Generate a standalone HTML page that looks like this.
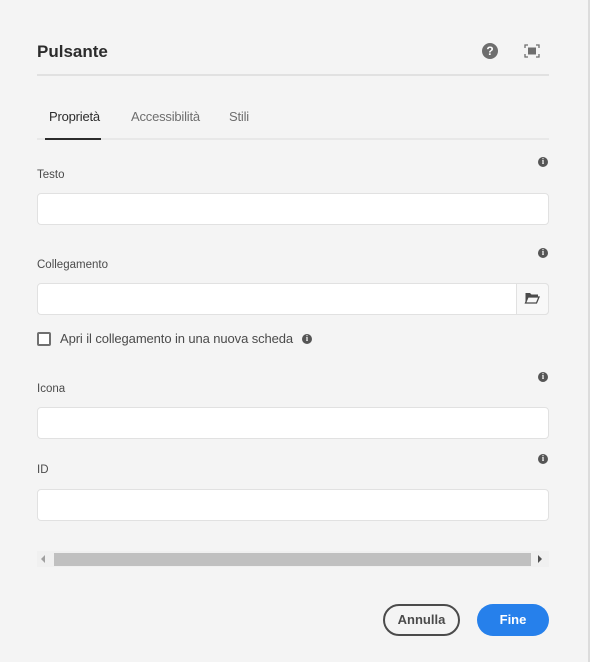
<!DOCTYPE html>
<html><head><meta charset="utf-8"><style>
*{box-sizing:border-box;margin:0;padding:0}
body{width:590px;height:662px;background:#f4f4f4;font-family:"Liberation Sans",sans-serif;position:relative;overflow:hidden;color:#4b4b4b}
.a{position:absolute}
.border{right:0;top:0;width:2px;height:662px;background:#dcdcdc}
.title{left:37px;top:42px;font-size:17px;font-weight:bold;color:#2c2c2c}
.sep{left:37px;top:74px;width:512px;height:2px;background:#e1e1e1}
.tab{top:109px;font-size:13px;color:#6e6e6e;letter-spacing:-0.2px}
.lbl{left:37px;font-size:11.5px;color:#4b4b4b}
.inp{left:37px;width:512px;height:32px;background:#fff;border:1px solid #e1e1e1;border-radius:4px}
.info{width:10px;height:10px;border-radius:50%;background:#555;color:#fff;font-size:8px;font-weight:bold;text-align:center;line-height:10px;font-family:"Liberation Serif",serif}
.btn{top:604px;height:32px;border-radius:16px;font-size:13px;font-weight:bold;text-align:center;line-height:28px}
</style></head><body>
<div class="a border"></div>
<div class="a title">Pulsante</div>
<div class="a" style="left:482px;top:43px;width:16px;height:16px;border-radius:50%;background:#6e6e6e;color:#fff;font-size:12px;font-weight:bold;text-align:center;line-height:16px">?</div>
<svg class="a" style="left:524px;top:44px" width="16" height="14" viewBox="0 0 16 14"><path d="M1 4V1h3M12 1h3v3M15 10v3h-3M4 13H1v-3" stroke="#6e6e6e" stroke-width="1.3" fill="none"/><rect x="4" y="3.5" width="8" height="7" fill="#6e6e6e"/></svg>
<div class="a sep"></div>
<div class="a tab" style="left:49px;color:#2c2c2c">Proprietà</div>
<div class="a tab" style="left:131px">Accessibilità</div>
<div class="a tab" style="left:229px">Stili</div>
<div class="a" style="left:37px;top:138px;width:512px;height:2px;background:#e8e8e8"></div>
<div class="a" style="left:45px;top:138px;width:56px;height:2px;background:#2c2c2c"></div>

<div class="a info" style="left:538px;top:157px">i</div>
<div class="a lbl" style="top:169px">Testo</div>
<div class="a inp" style="top:193px"></div>

<div class="a info" style="left:538px;top:248px">i</div>
<div class="a lbl" style="top:259px">Collegamento</div>
<div class="a inp" style="top:283px"></div>
<div class="a" style="left:516px;top:283px;width:33px;height:32px;background:#f8f8f8;border:1px solid #e1e1e1;border-radius:0 4px 4px 0"></div>
<svg class="a" style="left:524px;top:291px" width="16" height="14" viewBox="0 0 16 14"><path d="M1 2h5l1.5 1.5H14v2H4L1.5 12V2z" fill="#4b4b4b"/><path d="M1.5 12L4 6h11l-2.5 6z" fill="none" stroke="#4b4b4b" stroke-width="1.3"/></svg>

<div class="a" style="left:37px;top:332px;width:14px;height:14px;border:2px solid #707070;border-radius:2px;background:#fff"></div>
<div class="a" style="left:60px;top:331px;font-size:13px;color:#4b4b4b;letter-spacing:-0.1px">Apri il collegamento in una nuova scheda</div>
<div class="a info" style="left:302px;top:334px">i</div>

<div class="a info" style="left:538px;top:372px">i</div>
<div class="a lbl" style="top:383px">Icona</div>
<div class="a inp" style="top:407px"></div>

<div class="a info" style="left:538px;top:454px">i</div>
<div class="a lbl" style="top:464px">ID</div>
<div class="a inp" style="top:489px"></div>

<div class="a" style="left:37px;top:551px;width:512px;height:16px;background:#f0f0f0"></div>
<div class="a" style="left:54px;top:553px;width:477px;height:13px;background:#c0c0c0"></div>
<svg class="a" style="left:41px;top:555px" width="5" height="8"><path d="M4 0v8L0 4z" fill="#a0a0a0"/></svg>
<svg class="a" style="left:538px;top:555px" width="5" height="8"><path d="M0 0v8L4 4z" fill="#505050"/></svg>

<div class="a btn" style="left:383px;width:77px;border:2px solid #4b4b4b;color:#4b4b4b">Annulla</div>
<div class="a btn" style="left:477px;width:72px;background:#2680eb;color:#fff;line-height:32px">Fine</div>
</body></html>
